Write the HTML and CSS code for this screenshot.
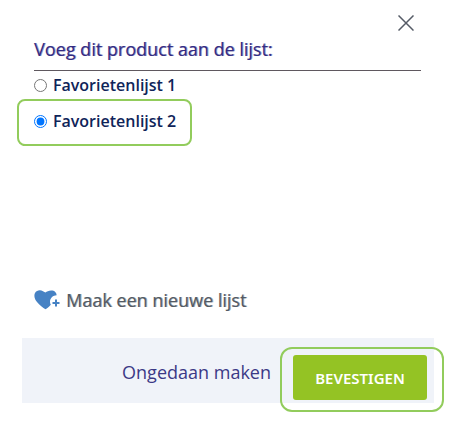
FILE: index.html
```html
<!DOCTYPE html>
<html lang="nl">
<head>
  <meta charset="UTF-8">
  <meta name="viewport" content="width=device-width, initial-scale=1.0">
  <title>Favorietenlijst</title>
  <link rel="stylesheet" href="styles.css">
</head>
<body>
<div class="modal">
  <div class="modal-header">
    <button type="button" class="close" aria-label="Sluiten">
      <svg width="16" height="16" viewBox="0 0 16 16" fill="none" stroke="#555b66" stroke-width="1.5">
        <path d="M0.5 0.5L15.5 15.5M15.5 0.5L0.5 15.5"/>
      </svg>
    </button>
  </div>

  <form class="modal-body">
    <h1>Voeg dit product aan de lijst:</h1>
    <div class="list-option">
      <input type="radio" id="list_1" name="wishlist">
      <label for="list_1">Favorietenlijst 1</label>
    </div>
    <div class="list-option selected">
      <input type="radio" id="list_2" name="wishlist" checked>
      <label for="list_2">Favorietenlijst 2</label>
    </div>
    <a href="#" class="new-list">
      <svg width="26" height="20" viewBox="0 0 26 20">
        <path fill="#4682c4" d="M11.5 19.3C9 18.2 5.500 15 3 12C0.500 9 -0.300 5.500 1 3C2.500 0.200 6.500 -0.300 9 1.200C10 1.800 10.800 2.300 11.500 2.600C13 1.200 15.500 0 18.500 0.500C21 1 22.700 3 22.600 5.300C19 5.500 16.300 8 16 11.300C15.900 12.500 16.300 13.800 16.800 14.800C15 16.700 13 18.600 11.500 19.300Z"/>
        <path stroke="#4682c4" stroke-width="2" d="M22 9.500V16.500M18.500 13H25.500"/>
      </svg>
      <span>Maak een nieuwe lijst</span>
    </a>
  </form>

  <div class="modal-footer">
    <button type="button" class="cancel">Ongedaan maken</button>
    <div class="confirm-wrap">
      <button type="button" class="confirm">BEVESTIGEN</button>
    </div>
  </div>
</div>
</body>
</html>
```

FILE: styles.css
```css
*, *::after {
  box-sizing: border-box;
}
body {
  margin: 0;
  padding-bottom: 24px;
  background: #fff;
  font-family: "Open Sans", "Noto Sans", sans-serif;
}
.modal {
  margin: 0 23px 0 22px;
}
.modal-header {
  display: flex;
  justify-content: flex-end;
  padding: 15px 20px 0 0;
}
.close {
  display: flex;
  padding: 0;
  border: 0;
  background: none;
}
.modal-body {
  padding: 0 13px 0 12px;
}
h1 {
  margin: 0;
  padding: 4px 0 7px;
  border-bottom: 1px solid #5f585f;
  color: #332c83;
  font-size: 18px;
  font-weight: 400;
  line-height: 28px;
  text-shadow: 1px 0 rgba(51, 44, 131, 0.5);
}
.list-option {
  display: flex;
  align-items: center;
  gap: 6px;
  position: relative;
  height: 28px;
  margin-bottom: 8px;
}
.list-option input {
  width: 13px;
  height: 13px;
  margin: 0;
}
.list-option label {
  color: #0f2459;
  font-size: 16px;
  font-weight: 600;
}
/* green frame around the chosen list */
.list-option.selected::after {
  content: "";
  position: absolute;
  top: -8px;
  left: -17px;
  width: 175px;
  height: 47px;
  border: 2px solid #92cc5c;
  border-radius: 8px;
  pointer-events: none;
}
.new-list {
  display: flex;
  align-items: center;
  gap: 6px;
  margin-top: 151px;
  color: #525a64;
  font-size: 18px;
  line-height: 28px;
  text-decoration: none;
  text-shadow: 1px 0 rgba(82, 90, 100, 0.5);
}
.modal-footer {
  display: flex;
  justify-content: flex-end;
  align-items: flex-end;
  gap: 22px;
  margin-top: 24px;
  padding: 17px 7px 3px;
  background: #f0f3f9;
}
.cancel {
  height: 34px;
  margin-bottom: 11px;
  padding: 0;
  border: 0;
  background: none;
  color: #3b3986;
  font-family: inherit;
  font-size: 18px;
}
.confirm-wrap {
  position: relative;
}
.confirm {
  display: block;
  width: 134px;
  height: 45px;
  padding: 0;
  border: 0;
  border-radius: 3px;
  background: #94c324;
  color: #fff;
  font-family: "Noto Sans", sans-serif;
  font-size: 15px;
  font-weight: 600;
}
.confirm-wrap::after {
  content: "";
  position: absolute;
  top: -8px;
  right: -17px;
  bottom: -12px;
  left: -13px;
  border: 2px solid #92cc5c;
  border-radius: 12px;
  pointer-events: none;
}
```
